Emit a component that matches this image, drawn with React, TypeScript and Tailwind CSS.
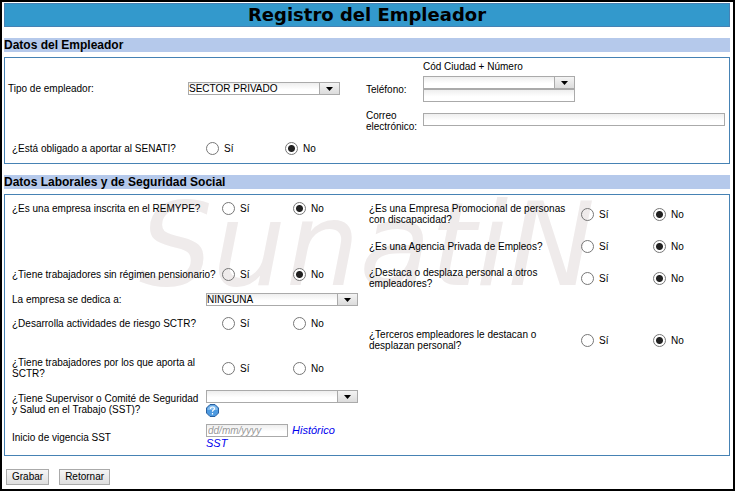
import type { ReactNode } from "react";

function SectionTitle({ children }: { children: ReactNode }) {
  return (
    <h2 className="mt-[11px] h-3.5 bg-[#b5c9eb] text-[12px] leading-[14px] font-bold">
      {children}
    </h2>
  );
}

function Radio({ name, label, checked }: { name: string; label: string; checked?: boolean }) {
  return (
    <label className="flex items-center gap-[5px]">
      <input
        type="radio"
        name={name}
        defaultChecked={checked}
        className="size-[13px] shrink-0 appearance-none rounded-full border border-[#777] checked:bg-[radial-gradient(circle,#222_0,#222_3px,#fff_4px)]"
      />
      {label}
    </label>
  );
}

// Yes/no question. The column widths differ a little between the panels.
function YesNo({
  name,
  question,
  value,
  labelWidth = "w-[210px]",
  optionWidth = "w-[71px]",
}: {
  name: string;
  question: string;
  value?: "no";
  labelWidth?: string;
  optionWidth?: string;
}) {
  return (
    <div role="radiogroup" aria-label={question} className="flex items-center">
      <span className={`${labelWidth} shrink-0`}>{question}</span>
      <div className={optionWidth}>
        <Radio name={name} label="Sí" />
      </div>
      <Radio name={name} label="No" checked={value === "no"} />
    </div>
  );
}

function Select({ id, label, options }: { id: string; label?: string; options: string[] }) {
  return (
    <div className="relative h-[13px] w-[152px]">
      <select
        id={id}
        aria-label={label}
        className="block h-[13px] w-full appearance-none border border-[#aaa] bg-linear-to-b from-[#eee] to-white to-60% leading-[11px]"
      >
        {options.map((o) => (
          <option key={o}>{o}</option>
        ))}
      </select>
      <span className="pointer-events-none absolute inset-y-0 right-0 flex w-[21px] items-center justify-center border border-[#aaa] bg-linear-to-b from-[#f4f4f4] to-[#dcdcdc]">
        <svg width="7" height="4" viewBox="0 0 7 4" aria-hidden="true">
          <path d="M0 0h7L3.5 4z" />
        </svg>
      </span>
    </div>
  );
}

function HelpIcon() {
  return (
    <svg width="13" height="13" viewBox="0 0 13 13" aria-hidden="true">
      <path d="M4 .5h5L12.5 4v5L9 12.5H4L.5 9V4z" fill="#4d9ae0" stroke="#2a5f9e" />
      <path d="M4.3 1.5h4.4l2.800 2.800v1.700h-10V4.300z" fill="#86bdee" />
      <path
        d="M4.5 5V4.500q0-1.500 2-1.500t2 1.500q0 1-1 1.500t-1 1.500v.3M6.500 9v1.400"
        fill="none"
        stroke="#fff"
        strokeWidth="1.2"
      />
    </svg>
  );
}

const inputStyle = "block h-[13px] border border-[#aaa] bg-linear-to-b from-[#eee] to-white to-60% px-px";
const buttonStyle =
  "h-4 border border-[#aaa] bg-linear-to-b from-[#f6f6f6] to-[#dedede] px-[5px] leading-[14px]";

export default function App() {
  return (
    <form
      className="border-2 border-black bg-white pt-px pr-[3px] pb-1 pl-0.5 font-['Liberation_Sans',Arial,sans-serif] text-[10px] leading-[11px] text-black"
      onSubmit={(e) => e.preventDefault()}
    >
      <h1 className="h-6 border border-[#4682b4] bg-[#3399cc] text-center font-['DejaVu_Sans',Verdana,sans-serif] text-[18px] leading-[22px] font-bold">
        Registro del Empleador
      </h1>

      <SectionTitle>Datos del Empleador</SectionTitle>
      <div className="mt-[5px] grid grid-cols-[361fr_363fr] border border-[#4682b4]">
        <div className="flex flex-col gap-[47px] pt-6 pb-2">
          <div className="flex items-center pl-[3px]">
            <label htmlFor="tipo" className="w-[180px]">
              Tipo de empleador:
            </label>
            <Select id="tipo" options={["SECTOR PRIVADO", "SECTOR PÚBLICO"]} />
          </div>
          <div className="pl-[7px]">
            <YesNo
              name="senati"
              question="¿Está obligado a aportar al SENATI?"
              value="no"
              labelWidth="w-[194px]"
              optionWidth="w-[79px]"
            />
          </div>
        </div>

        <div className="grid grid-cols-[57px_1fr] content-start items-center pt-[3px] pr-1">
          <p className="col-start-2">Cód Ciudad + Número</p>
          <label htmlFor="telefono" className="mt-1">
            Teléfono:
          </label>
          <div className="mt-1">
            <Select id="ciudad" label="Código de ciudad" options={[""]} />
            <input id="telefono" type="tel" className={`${inputStyle} w-[152px]`} />
          </div>
          <label htmlFor="correo" className="mt-2">
            Correo electrónico:
          </label>
          <input id="correo" type="email" className={`${inputStyle} mt-[5px] w-full`} />
        </div>
      </div>

      <SectionTitle>Datos Laborales y de Seguridad Social</SectionTitle>
      <div className="relative isolate mt-[5px] grid grid-cols-[361fr_363fr] border border-[#4682b4]">
        {/* watermark */}
        <div
          aria-hidden="true"
          className="pointer-events-none absolute inset-x-0 -top-2 -z-10 text-center font-['DejaVu_Sans',sans-serif] text-[116px] leading-none text-[#efebeb] italic select-none"
        >
          SunatiN
        </div>

        <div className="flex flex-col pt-[7px] pb-[5px] pl-[7px]">
          <YesNo name="remype" question="¿Es una empresa inscrita en el REMYPE?" value="no" />
          <div className="mt-[53px]">
            <YesNo name="pension" question="¿Tiene trabajadores sin régimen pensionario?" value="no" />
          </div>
          <div className="mt-3 flex items-center">
            <label htmlFor="dedica" className="w-[194px]">
              La empresa se dedica a:
            </label>
            <Select id="dedica" options={["NINGUNA"]} />
          </div>
          <div className="mt-[11px]">
            <YesNo name="riesgo" question="¿Desarrolla actividades de riesgo SCTR?" />
          </div>
          <div className="mt-[27px]">
            <YesNo name="sctr" question="¿Tiene trabajadores por los que aporta al SCTR?" />
          </div>
          <div className="mt-[11px] flex items-center">
            <label htmlFor="supervisor" className="w-[194px]">
              ¿Tiene Supervisor o Comité de Seguridad y Salud en el Trabajo (SST)?
            </label>
            <div className="flex flex-col items-start gap-px">
              <Select id="supervisor" options={[""]} />
              <button type="button" aria-label="Ayuda">
                <HelpIcon />
              </button>
            </div>
          </div>
          <div className="mt-[7px] flex items-center">
            <label htmlFor="vigencia" className="w-[194px]">
              Inicio de vigencia SST
            </label>
            <div className="w-[152px] text-[11px] leading-[13px] italic">
              <input
                id="vigencia"
                type="text"
                placeholder="dd/mm/yyyy"
                className="mr-1 h-[13px] w-[82px] border border-[#aaa] bg-linear-to-b from-[#eee] to-white to-60% px-px align-top text-[10px] leading-[11px] italic placeholder:text-[#999]"
              />
              <a href="#historico" className="text-[#0000ee]">
                Histórico SST
              </a>
            </div>
          </div>
        </div>

        <div className="flex flex-col pt-2 pl-[3px]">
          <YesNo
            name="promocional"
            question="¿Es una Empresa Promocional de personas con discapacidad?"
            value="no"
            labelWidth="w-[212px]"
            optionWidth="w-[72px]"
          />
          <div className="mt-[15px]">
            <YesNo
              name="agencia"
              question="¿Es una Agencia Privada de Empleos?"
              value="no"
              labelWidth="w-[212px]"
              optionWidth="w-[72px]"
            />
          </div>
          <div className="mt-3.5">
            <YesNo
              name="destaca"
              question="¿Destaca o desplaza personal a otros empleadores?"
              value="no"
              labelWidth="w-[212px]"
              optionWidth="w-[72px]"
            />
          </div>
          <div className="mt-10">
            <YesNo
              name="terceros"
              question="¿Terceros empleadores le destacan o desplazan personal?"
              value="no"
              labelWidth="w-[212px]"
              optionWidth="w-[72px]"
            />
          </div>
        </div>
      </div>

      <div className="mt-[13px] flex gap-2.5 pl-0.5">
        <button type="submit" className={buttonStyle}>
          Grabar
        </button>
        <button type="button" className={buttonStyle}>
          Retornar
        </button>
      </div>
    </form>
  );
}
